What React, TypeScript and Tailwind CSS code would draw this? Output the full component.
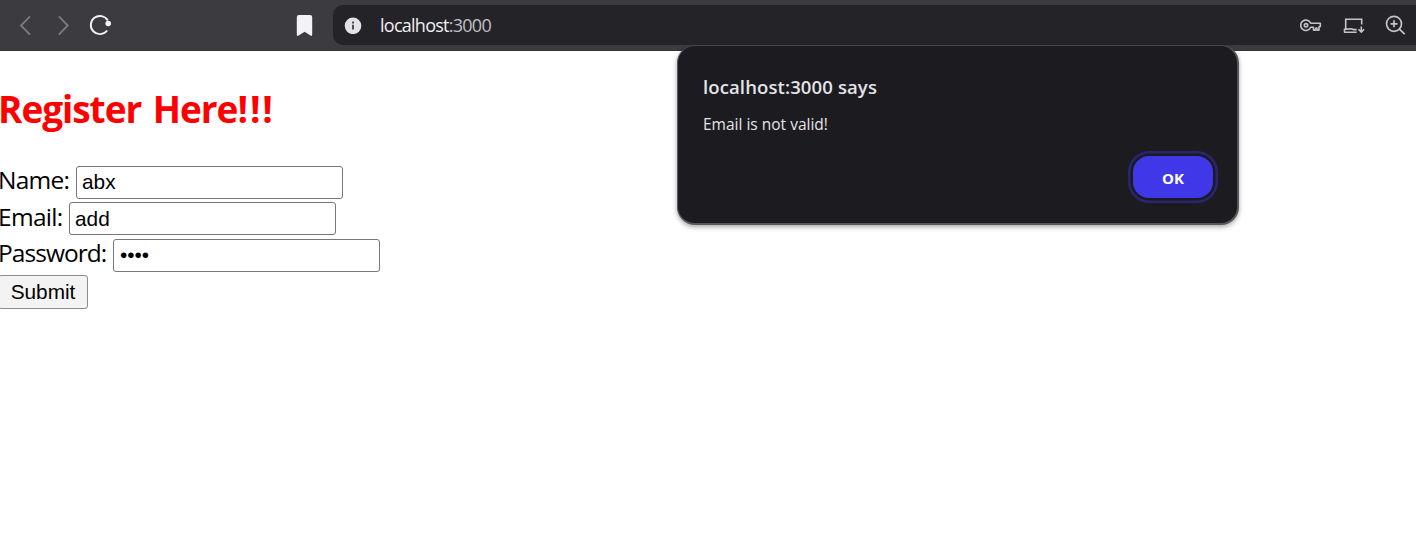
import React from 'react';

function Toolbar() {
  return (
    <header className="flex h-[51px] items-start border-b border-[#343338] bg-[#3c3b40]">
      <nav className="flex h-[50px] w-[333px] shrink-0 items-center">
        <svg className="ml-[16px] shrink-0" width="20" height="50" viewBox="0 0 20 50" fill="none" stroke="#7c7b80" strokeWidth="1.8">
          <path d="M14 16.300 5 25.500l9 9.200" />
        </svg>
        <svg className="ml-[17px] shrink-0" width="20" height="50" viewBox="0 0 20 50" fill="none" stroke="#7c7b80" strokeWidth="1.8">
          <path d="m5.800 16.300 9 9.200-9 9.200" />
        </svg>
        <svg className="ml-[15px] shrink-0" width="24" height="50" viewBox="0 0 24 50" fill="none" stroke="#f3f2f7" strokeWidth="1.9">
          <path d="M19.200 30.500A9.100 9.100 0 1 1 19.800 20.500" />
          <circle cx="20.200" cy="23.500" r="2.800" fill="#f3f2f7" stroke="none" />
        </svg>
        <svg className="ml-[183px] shrink-0" width="18" height="50" viewBox="0 0 18 50" fill="#f3f2f7">
          <path d="M4 15h11q2.200 0 2.200 2.200v17.300q0 2-1.700 1.100L9.600 31.800 3.600 35.600q-1.800.9-1.800-1.100V17.200q0-2.200 2.200-2.200Z" />
        </svg>
      </nav>
      <div className="mt-[5px] flex h-10 flex-1 items-center rounded-l-[10px] bg-[#242328]">
        <svg className="ml-[11px] shrink-0" width="18" height="18" viewBox="0 0 18 18">
          <circle cx="9" cy="9.800" r="8.300" fill="#e3e2e7" />
          <path d="M9 8.800v4.800M9 5.400v2" stroke="#48474c" strokeWidth="1.900" />
        </svg>
        <span className="ml-[18px] flex-1 whitespace-nowrap font-['Open_Sans',sans-serif] text-[18px] leading-[38px] tracking-[-0.740px] text-[#f0eff4]">
          localhost<span className="text-[#c0bfc5]">:3000</span>
        </span>
        <svg className="shrink-0" width="22" height="40" viewBox="0 0 22 40" fill="none" stroke="#c4c3c8" strokeWidth="1.600" strokeLinejoin="round">
          <path d="M10.700 18.300A5.200 5.200 0 1 0 10.700 22.300H13.500v2.800h1.800l.7-2h.8v2h2.200v-3.300l1.300-.3v-3.200Z" />
          <circle cx="6" cy="20.300" r="1.700" />
        </svg>
        <svg className="ml-[21px] shrink-0" width="22" height="40" viewBox="0 0 22 40" fill="none" stroke="#c4c3c8" strokeWidth="1.600">
          <path d="M2.700 24V14.200h16v5.300M1 24.400l7.500-.7 2 .9h3.200M1 27.200h12.700M1.500 23.800v3.600M18.300 21.500v5.500M15.500 24.300l2.800 2.800 2.800-2.800" />
        </svg>
        <svg className="ml-[20px] mr-[9px] shrink-0" width="22" height="40" viewBox="0 0 22 40" fill="none" stroke="#c4c3c8" strokeWidth="1.700">
          <circle cx="9" cy="18.800" r="7.500" />
          <path d="M9 15.300v7M5.500 18.800h7M14.400 24.200l5.300 5" />
        </svg>
      </div>
    </header>
  );
}

const inputStyle =
  "h-[33px] w-[267px] rounded-[3px] border border-[#76767c] bg-white font-['Liberation_Sans',sans-serif] text-[20.8px] text-black outline-none";
const labelStyle =
  "h-[33px] shrink-0 whitespace-nowrap font-['Open_Sans',sans-serif] text-[24.500px] text-black";

function RegisterForm() {
  return (
    <main className="pt-[32px]">
      <h1 className="h-[83px] whitespace-nowrap -indent-[2px] font-['Open_Sans',sans-serif] text-[37px] font-bold leading-[52px] tracking-[-1.050px] text-[#ff0000] [word-spacing:3px]">
        Register Here<span className="tracking-[1.900px]">!!!</span>
      </h1>
      <form className="flex flex-col items-start" onSubmit={(e) => e.preventDefault()}>
        <div className="flex h-[36px]">
          <label htmlFor="name" className={`${labelStyle} w-[76px] -indent-[2px] leading-[28px] tracking-[-0.750px]`}>Name:</label>
          <input id="name" className={`${inputStyle} px-[5px] pb-[2px]`} defaultValue="abx" />
        </div>
        <div className="flex h-[37px]">
          <label htmlFor="email" className={`${labelStyle} w-[69px] -indent-[2px] leading-[30px] tracking-[-0.700px]`}>Email:</label>
          <input id="email" className={`${inputStyle} px-[5px]`} defaultValue="add" />
        </div>
        <div className="flex h-[36px]">
          <label htmlFor="password" className={`${labelStyle} w-[113px] -indent-[2px] leading-[28px] tracking-[-0.950px]`}>Password:</label>
          <input id="password" type="password" autoComplete="off" className={`${inputStyle} px-[6px] pb-[2px]`} defaultValue="abcd" />
        </div>
        <button className="-ml-[2px] h-[34px] w-[90px] rounded-[3px] border border-[#8b8b8e] bg-[#f3f3f3] font-['Liberation_Sans',sans-serif] text-[20.800px] leading-[32px] text-black">
          Submit
        </button>
      </form>
    </main>
  );
}

function AlertDialog() {
  return (
    <section
      role="alertdialog"
      className="absolute left-[677px] top-[45px] flex h-[180px] w-[562px] flex-col rounded-[18px] border border-b-2 border-r-2 border-[#58585c] border-t-[#48474c] bg-[#1c1b1f] pl-[25px] pr-[24px] shadow-[0_2px_5px_rgba(0,0,0,0.35)]"
    >
      <h2 className="mt-[26px] h-[36px] whitespace-nowrap font-['Open_Sans',sans-serif] text-[18.500px] font-semibold leading-[30px] tracking-[0.120px] text-[#e4e3e9]">
        localhost:3000 says
      </h2>
      <p className="h-[48px] whitespace-nowrap font-['Open_Sans',sans-serif] text-[15.500px] leading-[32px] text-[#e4e3e9]">
        Email is not valid!
      </p>
      <button className="h-[42px] w-[80px] self-end rounded-[16px] bg-[#4038e8] font-['Open_Sans',sans-serif] text-[15px] font-bold leading-[44px] text-white shadow-[0_0_0_2.5px_#1c1b1f,0_0_0_5px_#29266f]">
        OK
      </button>
    </section>
  );
}

export default function App() {
  return (
    <div className="relative h-[537px] w-[1416px] overflow-hidden bg-white">
      <Toolbar />
      <RegisterForm />
      <AlertDialog />
    </div>
  );
}
